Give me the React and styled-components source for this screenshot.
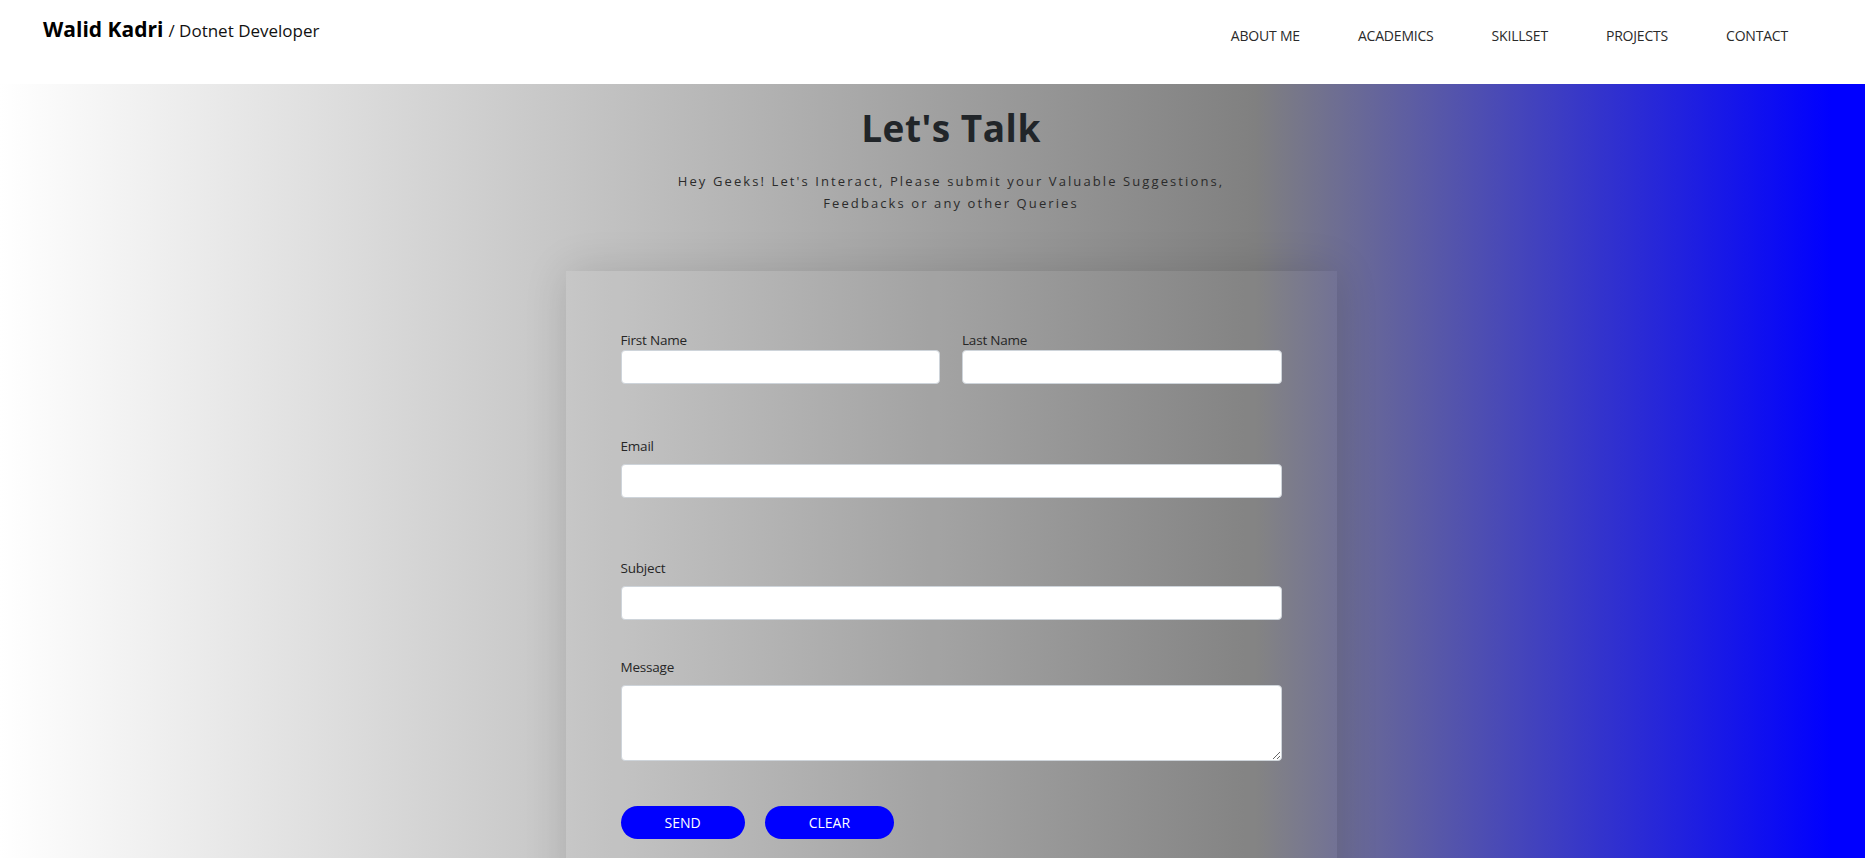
import React from "react";
import styled, { createGlobalStyle } from "styled-components";

const GlobalStyle = createGlobalStyle`
  * { box-sizing: border-box; }
  html, body { margin: 0; padding: 0; }
  body {
    font-family: "Open Sans", "Noto Sans", sans-serif;
    color: #212529;
    background: #fff;
  }
`;

const Header = styled.header`
  height: 84px;
  background: #fff;
  display: flex;
  justify-content: space-between;
  align-items: flex-start;
  padding: 0 77px 0 43px;
`;

const Brand = styled.div`
  margin-top: 14px;
  display: flex;
  align-items: baseline;
  gap: 5px;
  line-height: 30px;
`;

const BrandName = styled.span`
  font-size: 21px;
  font-weight: 700;
  color: #000;
`;

const BrandRole = styled.span`
  font-size: 17px;
  font-weight: 400;
  color: #111;
`;

const Nav = styled.nav`
  margin-top: 26px;
  display: flex;
  gap: 58px;
`;

const NavLink = styled.a`
  font-size: 14px;
  line-height: 20px;
  text-transform: uppercase;
  color: #2a2a2a;
  text-decoration: none;
  letter-spacing: -0.2px;
`;

const Section = styled.section`
  background: linear-gradient(
    to right,
    #ffffff 0%,
    #808080 67.3%,
    #0000ff 98.2%,
    #0000ff 100%
  );
  display: flex;
  flex-direction: column;
  align-items: center;
  padding: 20px 0 60px 37px;
`;

const Title = styled.h2`
  margin: 0;
  font-size: 37px;
  line-height: 48px;
  font-weight: 700;
  color: #212529;
  letter-spacing: 0.5px;
`;

const Lead = styled.p`
  margin: 18px 0 0;
  font-size: 13px;
  line-height: 22px;
  letter-spacing: 2.1px;
  color: #2b2b2b;
  text-align: center;
  max-width: 620px;
`;

const Card = styled.form`
  margin-top: 57px;
  width: 771px;
  padding: 60px 55px;
  background: rgba(255, 255, 255, 0.03);
  box-shadow: 0 0 40px rgba(0, 0, 0, 0.13);
  display: flex;
  flex-direction: column;
`;

const Row = styled.div`
  display: grid;
  grid-template-columns: 1fr 1fr;
  gap: 22px;
`;

const Field = styled.div`
  display: flex;
  flex-direction: column;
  margin-top: ${(p) => p.$top || 0}px;
`;

const Label = styled.label`
  font-size: 13.5px;
  line-height: 18px;
  color: #262626;
  margin-bottom: ${(p) => p.$gap || 1}px;
  letter-spacing: -0.2px;
`;

const Input = styled.input`
  height: 34px;
  width: 100%;
  border: 1px solid #ced4da;
  border-radius: 4px;
  background: #fff;
  padding: 6px 12px;
  font: inherit;
  font-size: 14px;
`;

const TextArea = styled.textarea`
  height: 76px;
  width: 100%;
  border: 1px solid #ced4da;
  border-radius: 4px;
  background: #fff;
  padding: 6px 12px;
  font: inherit;
  font-size: 14px;
`;

const Actions = styled.div`
  display: flex;
  gap: 20px;
  margin-top: 45px;
`;

const Button = styled.button`
  height: 33px;
  padding: 0 44px;
  border: none;
  border-radius: 17px;
  background: #0000ff;
  color: #fff;
  font-family: inherit;
  font-size: 14px;
  font-weight: 500;
  text-transform: uppercase;
  cursor: pointer;
`;

const navItems = ["About Me", "Academics", "Skillset", "Projects", "Contact"];

export default function App() {
  return (
    <>
      <GlobalStyle />
      <Header>
        <Brand>
          <BrandName>Walid Kadri</BrandName>
          <BrandRole>/ Dotnet Developer</BrandRole>
        </Brand>
        <Nav>
          {navItems.map((n) => (
            <NavLink key={n} href="#">
              {n}
            </NavLink>
          ))}
        </Nav>
      </Header>
      <Section>
        <Title>Let's Talk</Title>
        <Lead>
          Hey Geeks! Let's Interact, Please submit your Valuable Suggestions,
          Feedbacks or any other Queries
        </Lead>
        <Card onSubmit={(e) => e.preventDefault()}>
          <Row>
            <Field>
              <Label>First Name</Label>
              <Input type="text" />
            </Field>
            <Field>
              <Label>Last Name</Label>
              <Input type="text" />
            </Field>
          </Row>
          <Field $top={53}>
            <Label $gap={9}>Email</Label>
            <Input type="email" />
          </Field>
          <Field $top={61}>
            <Label $gap={9}>Subject</Label>
            <Input type="text" />
          </Field>
          <Field $top={38}>
            <Label $gap={9}>Message</Label>
            <TextArea />
          </Field>
          <Actions>
            <Button type="submit">Send</Button>
            <Button type="reset">Clear</Button>
          </Actions>
        </Card>
      </Section>
    </>
  );
}
